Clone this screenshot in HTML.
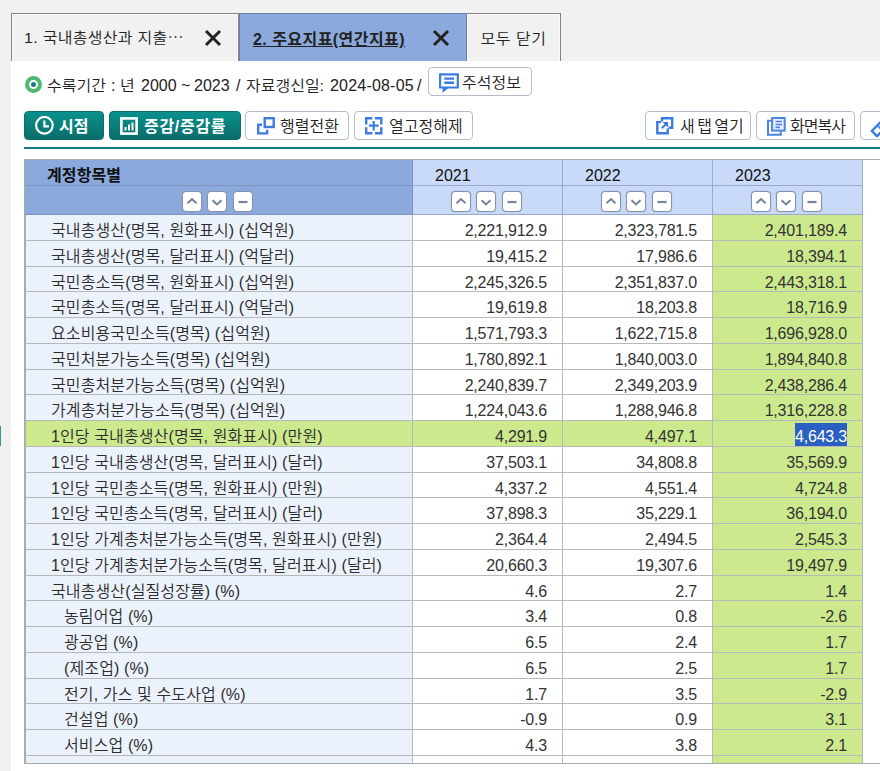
<!DOCTYPE html>
<html lang="ko">
<head>
<meta charset="utf-8">
<title>주요지표(연간지표)</title>
<style>
*{box-sizing:border-box;margin:0;padding:0}
html,body{width:880px;height:771px;overflow:hidden}
body{background:#f1f1f1;font-family:"Liberation Sans","Noto Sans CJK KR",sans-serif;color:#222;font-size:16px;font-weight:350;position:relative}
.panel{position:absolute;left:11px;top:61px;width:869px;height:710px;background:#fff}
.lmark{position:absolute;left:0;top:426px;width:1px;height:20px;background:#2f9a98}
.tabs{position:absolute;left:11px;top:13px;height:48px;display:flex}
.tab{height:48px;border-top:1px solid #858585;border-left:1px solid #858585;background:#f1f1f1;box-shadow:inset 1px 1px 0 #f9f9f9,inset -1px 0 0 #f9f9f9;position:relative;font-size:16px;line-height:47px;white-space:nowrap}
.tab1{width:228px;border-right:1px solid #858585}
.tab2{width:228px;background:#8ca9dd;border-color:#6f80a8;border-right:1px solid #6f80a8;box-shadow:none}
.tab3{width:94px;border-left:0;border-right:1px solid #858585;text-align:center;letter-spacing:0.5px;line-height:51px}
.tab .t{position:absolute;left:12px;top:2px;letter-spacing:0.3px}
.tab1 .t{top:0px;transform:scaleY(0.9);transform-origin:50% 61%}
.tab2 .t{left:13px;letter-spacing:0.45px;font-weight:bold;text-decoration:underline;color:#222}
.tab3 .q{display:inline-block;position:relative;top:-1px;transform:scaleY(0.9);transform-origin:50% 61%}
.tab .x{position:absolute;left:192px;top:15px;width:18px;height:18px}
.info{position:absolute;left:0;top:69px;height:34px;line-height:34px;font-size:16px;white-space:nowrap}
.info span{position:absolute;top:0;white-space:pre}
.info .k{transform:scaleY(0.92);transform-origin:50% 68%}
.bul{position:absolute;left:25px;top:76px;width:17px;height:17px;border-radius:50%;border:4px solid #4cb96e;background:#fff}
.bul i{position:absolute;left:2px;top:2px;width:5px;height:5px;border-radius:50%;background:#1c7a86}
.btn{position:absolute;height:29px;border:1px solid #b5bccb;border-radius:4px;background:#fff;font-size:16px;line-height:27px;white-space:nowrap;color:#222}
.btn.g{border:1px solid #0b6f69;background:linear-gradient(#0a918d,#0a6d6b);color:#fff;font-weight:bold}
.btn svg{position:absolute}
.btn span{position:absolute;top:1px}
.hr{position:absolute;left:24px;top:147px;width:856px;height:2px;background:#0f7d79}
.grid{position:absolute;left:24px;top:159px;width:856px;height:605px;border:1px solid #a9a9a9;border-right:0;overflow:hidden;background:#fff}
.h1,.h2,.r{display:flex;width:838px}
.h1{height:26px}
.h2{height:29px}
.h1 .c,.h2 .c{border-right:1px solid #9aaace;border-bottom:1px solid #9aaace;background:#c9daf8;height:100%}
.h1 .c.l,.h2 .c.l{background:#8ca9dd;border-color:#7f92bd}
.c{flex:none;width:150px;height:100%;border-right:1px solid #b8b8b8;border-bottom:1px solid #b8b8b8;white-space:nowrap;overflow:hidden;line-height:24px;padding-top:4px;font-weight:350;color:#2c2c2c}
.c.l{width:388px;background:#ebf2fb;padding-left:26px;letter-spacing:0.12px}
.c.l.in{padding-left:39px}
.c.n{text-align:right;padding-right:15px;letter-spacing:-0.2px;color:#333}
.c.g{background:#cde98e}
.r.hl .c{background:#cde98e}
.r .c.l{border-left:1px solid #b3b3b3;padding-left:25px}
.r .c.l.in{padding-left:38px}
.h1 .c{padding-left:22px;padding-top:2px;line-height:27px;color:#111}
.h1 .c.l{padding-left:22px;font-weight:bold}
.h2 .c{position:relative;padding:0}
.sb{position:absolute;top:5px;width:20px;height:21px;border:1px solid #8493ad;border-radius:4px;background:#fff;box-shadow:0 0 1px #8493ad}
.sb svg{position:absolute;left:0;top:0}
.sel{display:inline-block;vertical-align:top;margin-top:-2px;padding-top:2px;height:23px;line-height:24px;background:#2a60c0;color:#fff}
</style>
</head>
<body>
<div class="tabs">
  <div class="tab tab1"><span class="t">1. 국내총생산과 지출⋯</span><svg class="x" viewBox="0 0 18 18"><path d="M2 2L16 16M16 2L2 16" stroke="#222" stroke-width="2.9" fill="none"/></svg></div>
  <div class="tab tab2"><span class="t">2. 주요지표(연간지표)</span><svg class="x" viewBox="0 0 18 18"><path d="M2 2L16 16M16 2L2 16" stroke="#222" stroke-width="2.9" fill="none"/></svg></div>
  <div class="tab tab3"><span class="q">모두 닫기</span></div>
</div>
<div class="panel"></div>
<div class="lmark"></div>
<div class="bul"><i></i></div>
<div class="info"><span id="iA" class="k" style="left:47px">수록기간 </span><span id="iB" style="left:111px">: </span><span id="iC" class="k" style="left:120px">년 </span><span id="iD" style="left:141px">2000 </span><span id="iE" style="left:181px">~ </span><span id="iF" style="left:194px">2023 </span><span id="iG" style="left:236px">/ </span><span id="iH" class="k" style="left:246px">자료갱신일: </span><span id="iI" style="left:330px;letter-spacing:0.2px">2024-08-05 </span><span id="iJ" style="left:417px">/</span></div>
<div class="btn" style="left:428px;top:67px;width:104px"><svg style="left:10px;top:5px" width="21" height="21" viewBox="0 0 21 21"><path d="M1.100 1.300H18.800V14.500H1.100Z" fill="none" stroke="#3d7be0" stroke-width="2.200"/><path d="M3.500 15V19.800L9.500 15Z" fill="#3d7be0"/><path d="M5.300 5.600H15M5.300 9.700H15" stroke="#3d7be0" stroke-width="2.400"/></svg><span style="left:33px;transform:scaleY(0.91);transform-origin:50% 77%">주석정보</span></div>
<div class="btn g" style="left:24px;top:111px;width:80px"><svg style="left:10px;top:4px" width="20" height="20" viewBox="0 0 20 20"><circle cx="9.400" cy="9.300" r="8.300" fill="none" stroke="#fff" stroke-width="2.200"/><path d="M9.400 4.500V10.300H14" fill="none" stroke="#fff" stroke-width="2.200"/></svg><span style="left:34px">시점</span></div>
<div class="btn g" style="left:109px;top:111px;width:132px"><svg style="left:10px;top:5px" width="18" height="18" viewBox="0 0 18 18"><rect x="1.400" y="1.400" width="15.200" height="15.200" fill="none" stroke="#fff" stroke-width="2.600"/><path d="M5.500 13.500V10M9 13.500V7.500M12.500 13.500V5.500" stroke="#fff" stroke-width="2"/></svg><span style="left:34px;letter-spacing:0.7px">증감/증감률</span></div>
<div class="btn" style="left:245px;top:111px;width:104px"><svg style="left:11px;top:5px" width="19" height="19" viewBox="0 0 19 19"><rect x="7.700" y="1.200" width="9" height="8.800" fill="none" stroke="#3d7be0" stroke-width="2.400"/><path d="M5 7.700H1.200V16.400H10.100V12.700" fill="none" stroke="#3d7be0" stroke-width="2.400"/></svg><span style="left:34px">행렬전환</span></div>
<div class="btn" style="left:354px;top:111px;width:119px"><svg style="left:10px;top:5px" width="19" height="19" viewBox="0 0 19 19"><path d="M7.300 1.200H1.200V7.400M10 1.200H16.300V7.400M1.200 10.300V16.300H7.300M16.300 10.300V16.300H10" fill="none" stroke="#3d7be0" stroke-width="2.400"/><path d="M3.900 8.700H13.700M8.700 4V13.500" stroke="#3d7be0" stroke-width="2.200"/></svg><span style="left:34px">열고정해제</span></div>
<div class="btn" style="left:645px;top:111px;width:106px"><svg style="left:10px;top:5px" width="19" height="19" viewBox="0 0 19 19"><path d="M6 4.500V1.200H16.200V10.700H12.500" fill="none" stroke="#3d7be0" stroke-width="2.400"/><path d="M5 5.100H1.300V16.300H11.700V11.500" fill="none" stroke="#3d7be0" stroke-width="2.400"/><path d="M5.800 11.200L10.500 6.500" fill="none" stroke="#3d7be0" stroke-width="2"/><path d="M6.500 5H12V10.500Z" fill="#3d7be0"/></svg><span style="left:34px;word-spacing:-2px">새 탭 열기</span></div>
<div class="btn" style="left:756px;top:111px;width:99px"><svg style="left:10px;top:5px" width="20" height="20" viewBox="0 0 20 20"><path d="M4.500 3.800H1V17.700H13.800V14.500" fill="none" stroke="#4a84e4" stroke-width="2"/><rect x="5.100" y="1" width="12.600" height="12.600" fill="#e8f0fd" stroke="#4a84e4" stroke-width="2"/><path d="M8.500 4.500H15M8.500 7.500H15M8.500 10.400H13" stroke="#4a84e4" stroke-width="1.600"/></svg><span style="left:33px;letter-spacing:-1px">화면복사</span></div>
<div class="btn" style="left:860px;top:111px;width:60px"><svg style="left:9px;top:8px" width="20" height="20" viewBox="0 0 20 20"><path d="M1.800 11L7 16.200L17 6.200L11.800 1Z" fill="none" stroke="#3d7be0" stroke-width="2.400" stroke-linejoin="round"/><path d="M7.500 5.500L10.500 8.500" stroke="#5a90ea" stroke-width="2"/></svg></div>

<div class="hr"></div>
<div class="grid">
<div class="h1"><div class="c l">계정항목별</div><div class="c">2021</div><div class="c">2022</div><div class="c">2023</div></div>
<div class="h2"><div class="c l"><span class="sb" style="left:157px"><svg width="18" height="19" viewBox="0 0 18 19"><path d="M4.500 11.200L9 7L13.500 11.200" stroke="#73839f" stroke-width="2" fill="none"/></svg></span><span class="sb" style="left:182px"><svg width="18" height="19" viewBox="0 0 18 19"><path d="M4.500 8.200L9 12.400L13.500 8.200" stroke="#73839f" stroke-width="2" fill="none"/></svg></span><span class="sb" style="left:208px"><svg width="18" height="19" viewBox="0 0 18 19"><path d="M4.500 10H13.500" stroke="#73839f" stroke-width="2.200" fill="none"/></svg></span></div><div class="c"><span class="sb" style="left:38px"><svg width="18" height="19" viewBox="0 0 18 19"><path d="M4.500 11.200L9 7L13.500 11.200" stroke="#73839f" stroke-width="2" fill="none"/></svg></span><span class="sb" style="left:63px"><svg width="18" height="19" viewBox="0 0 18 19"><path d="M4.500 8.200L9 12.400L13.500 8.200" stroke="#73839f" stroke-width="2" fill="none"/></svg></span><span class="sb" style="left:89px"><svg width="18" height="19" viewBox="0 0 18 19"><path d="M4.500 10H13.500" stroke="#73839f" stroke-width="2.200" fill="none"/></svg></span></div><div class="c"><span class="sb" style="left:38px"><svg width="18" height="19" viewBox="0 0 18 19"><path d="M4.500 11.200L9 7L13.500 11.200" stroke="#73839f" stroke-width="2" fill="none"/></svg></span><span class="sb" style="left:63px"><svg width="18" height="19" viewBox="0 0 18 19"><path d="M4.500 8.200L9 12.400L13.500 8.200" stroke="#73839f" stroke-width="2" fill="none"/></svg></span><span class="sb" style="left:89px"><svg width="18" height="19" viewBox="0 0 18 19"><path d="M4.500 10H13.500" stroke="#73839f" stroke-width="2.200" fill="none"/></svg></span></div><div class="c"><span class="sb" style="left:38px"><svg width="18" height="19" viewBox="0 0 18 19"><path d="M4.500 11.200L9 7L13.500 11.200" stroke="#73839f" stroke-width="2" fill="none"/></svg></span><span class="sb" style="left:63px"><svg width="18" height="19" viewBox="0 0 18 19"><path d="M4.500 8.200L9 12.400L13.500 8.200" stroke="#73839f" stroke-width="2" fill="none"/></svg></span><span class="sb" style="left:89px"><svg width="18" height="19" viewBox="0 0 18 19"><path d="M4.500 10H13.500" stroke="#73839f" stroke-width="2.200" fill="none"/></svg></span></div></div>
<div class="r" style="height:26px"><div class="c l">국내총생산(명목, 원화표시) (십억원)</div><div class="c n">2,221,912.9</div><div class="c n">2,323,781.5</div><div class="c n g">2,401,189.4</div></div>
<div class="r" style="height:26px"><div class="c l">국내총생산(명목, 달러표시) (억달러)</div><div class="c n">19,415.2</div><div class="c n">17,986.6</div><div class="c n g">18,394.1</div></div>
<div class="r" style="height:25px"><div class="c l">국민총소득(명목, 원화표시) (십억원)</div><div class="c n">2,245,326.5</div><div class="c n">2,351,837.0</div><div class="c n g">2,443,318.1</div></div>
<div class="r" style="height:26px"><div class="c l">국민총소득(명목, 달러표시) (억달러)</div><div class="c n">19,619.8</div><div class="c n">18,203.8</div><div class="c n g">18,716.9</div></div>
<div class="r" style="height:26px"><div class="c l">요소비용국민소득(명목) (십억원)</div><div class="c n">1,571,793.3</div><div class="c n">1,622,715.8</div><div class="c n g">1,696,928.0</div></div>
<div class="r" style="height:26px"><div class="c l">국민처분가능소득(명목) (십억원)</div><div class="c n">1,780,892.1</div><div class="c n">1,840,003.0</div><div class="c n g">1,894,840.8</div></div>
<div class="r" style="height:25px"><div class="c l">국민총처분가능소득(명목) (십억원)</div><div class="c n">2,240,839.7</div><div class="c n">2,349,203.9</div><div class="c n g">2,438,286.4</div></div>
<div class="r" style="height:26px"><div class="c l">가계총처분가능소득(명목) (십억원)</div><div class="c n">1,224,043.6</div><div class="c n">1,288,946.8</div><div class="c n g">1,316,228.8</div></div>
<div class="r hl" style="height:26px"><div class="c l">1인당 국내총생산(명목, 원화표시) (만원)</div><div class="c n">4,291.9</div><div class="c n">4,497.1</div><div class="c n g"><span class="sel">4,643.3</span></div></div>
<div class="r" style="height:26px"><div class="c l">1인당 국내총생산(명목, 달러표시) (달러)</div><div class="c n">37,503.1</div><div class="c n">34,808.8</div><div class="c n g">35,569.9</div></div>
<div class="r" style="height:25px"><div class="c l">1인당 국민총소득(명목, 원화표시) (만원)</div><div class="c n">4,337.2</div><div class="c n">4,551.4</div><div class="c n g">4,724.8</div></div>
<div class="r" style="height:26px"><div class="c l">1인당 국민총소득(명목, 달러표시) (달러)</div><div class="c n">37,898.3</div><div class="c n">35,229.1</div><div class="c n g">36,194.0</div></div>
<div class="r" style="height:26px"><div class="c l">1인당 가계총처분가능소득(명목, 원화표시) (만원)</div><div class="c n">2,364.4</div><div class="c n">2,494.5</div><div class="c n g">2,545.3</div></div>
<div class="r" style="height:26px"><div class="c l">1인당 가계총처분가능소득(명목, 달러표시) (달러)</div><div class="c n">20,660.3</div><div class="c n">19,307.6</div><div class="c n g">19,497.9</div></div>
<div class="r" style="height:25px"><div class="c l">국내총생산(실질성장률) (%)</div><div class="c n">4.6</div><div class="c n">2.7</div><div class="c n g">1.4</div></div>
<div class="r" style="height:26px"><div class="c l in">농림어업 (%)</div><div class="c n">3.4</div><div class="c n">0.8</div><div class="c n g">-2.6</div></div>
<div class="r" style="height:26px"><div class="c l in">광공업 (%)</div><div class="c n">6.5</div><div class="c n">2.4</div><div class="c n g">1.7</div></div>
<div class="r" style="height:26px"><div class="c l in">(제조업) (%)</div><div class="c n">6.5</div><div class="c n">2.5</div><div class="c n g">1.7</div></div>
<div class="r" style="height:25px"><div class="c l in">전기, 가스 및 수도사업 (%)</div><div class="c n">1.7</div><div class="c n">3.5</div><div class="c n g">-2.9</div></div>
<div class="r" style="height:26px"><div class="c l in">건설업 (%)</div><div class="c n">-0.9</div><div class="c n">0.9</div><div class="c n g">3.1</div></div>
<div class="r" style="height:26px"><div class="c l in">서비스업 (%)</div><div class="c n">4.3</div><div class="c n">3.8</div><div class="c n g">2.1</div></div>
<div class="r" style="height:26px"><div class="c l"></div><div class="c n"></div><div class="c n"></div><div class="c n g"></div></div>
</div>
</body>
</html>
